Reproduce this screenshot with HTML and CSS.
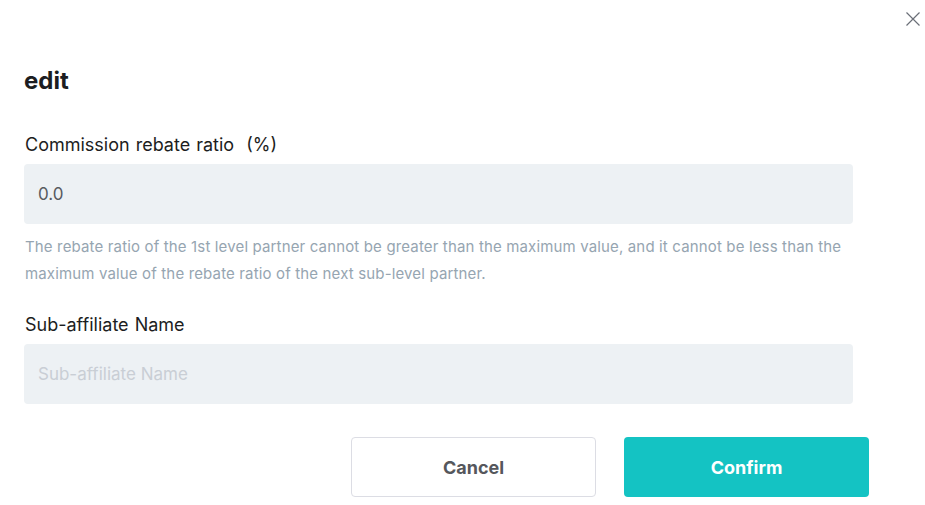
FILE: index.html
```html
<!DOCTYPE html>
<html>
<head>
<meta charset="utf-8">
<link rel="stylesheet" href="styles.css">
</head>
<body>
<div class="modal">
  <button class="close" aria-label="close">
    <svg width="14" height="14" viewBox="0 0 14 14"><path d="M0.5 0.5L13.5 13.5M13.5 0.5L0.5 13.5" stroke="#6b6f78" stroke-width="1.2" fill="none"/></svg>
  </button>
  <h1 class="title">edit</h1>
  <div class="field">
    <label class="label">Commission rebate ratio&nbsp;&nbsp;(%)</label>
    <div class="input value">0.0</div>
    <p class="help">The rebate ratio of the 1st level partner cannot be greater than the maximum value, and it cannot be less than the maximum value of the rebate ratio of the next sub-level partner.</p>
  </div>
  <div class="field">
    <label class="label">Sub-affiliate Name</label>
    <div class="input placeholder">Sub-affiliate Name</div>
  </div>
  <div class="actions">
    <button class="btn cancel">Cancel</button>
    <button class="btn confirm">Confirm</button>
  </div>
</div>
</body>
</html>
```
FILE: styles.css
```css
html, body { margin: 0; padding: 0; background: #fff; }
body { font-family: Inter, Roboto, sans-serif; color: #1c1d21; }
.modal { position: relative; width: 925px; height: 505px; box-sizing: border-box; padding: 0 73px 0 24px; }
.close { position: absolute; top: 11px; right: 4px; width: 16px; height: 16px; padding: 0; border: 0; background: none; display: flex; align-items: center; justify-content: center; }
.title { margin: 0; padding-top: 65px; font-size: 24px; font-weight: 700; line-height: 32px; height: 32px; }
.field { display: flex; flex-direction: column; }
.field:first-of-type { margin-top: 35px; }
.label { font-size: 18px; line-height: 26px; margin-left: 1px; margin-bottom: 6px; color: #1c1d21; word-spacing: 1px; }
.input { height: 60px; width: 829px; box-sizing: border-box; background: #edf1f4; border-radius: 4px; padding: 0 14px; display: flex; align-items: center; font-size: 17px; }
.value { color: #585b60; }
.placeholder { color: #c9ced5; }
.help { margin: 9px 0 0 1px; font-size: 15px; line-height: 27px; letter-spacing: 0.15px; color: #96a5b1; width: 840px; }
.field + .field { margin-top: 25px; }
.actions { display: flex; justify-content: flex-end; gap: 28px; margin-top: 33px; margin-right: -17px; }
.btn { width: 245px; height: 60px; border-radius: 4px; font-family: Inter, Roboto, sans-serif; font-size: 18px; font-weight: 700; cursor: pointer; }
.cancel { background: #fff; border: 1px solid #dcdde4; color: #55575c; }
.confirm { background: #14c3c3; border: 0; color: #fff; }
```
